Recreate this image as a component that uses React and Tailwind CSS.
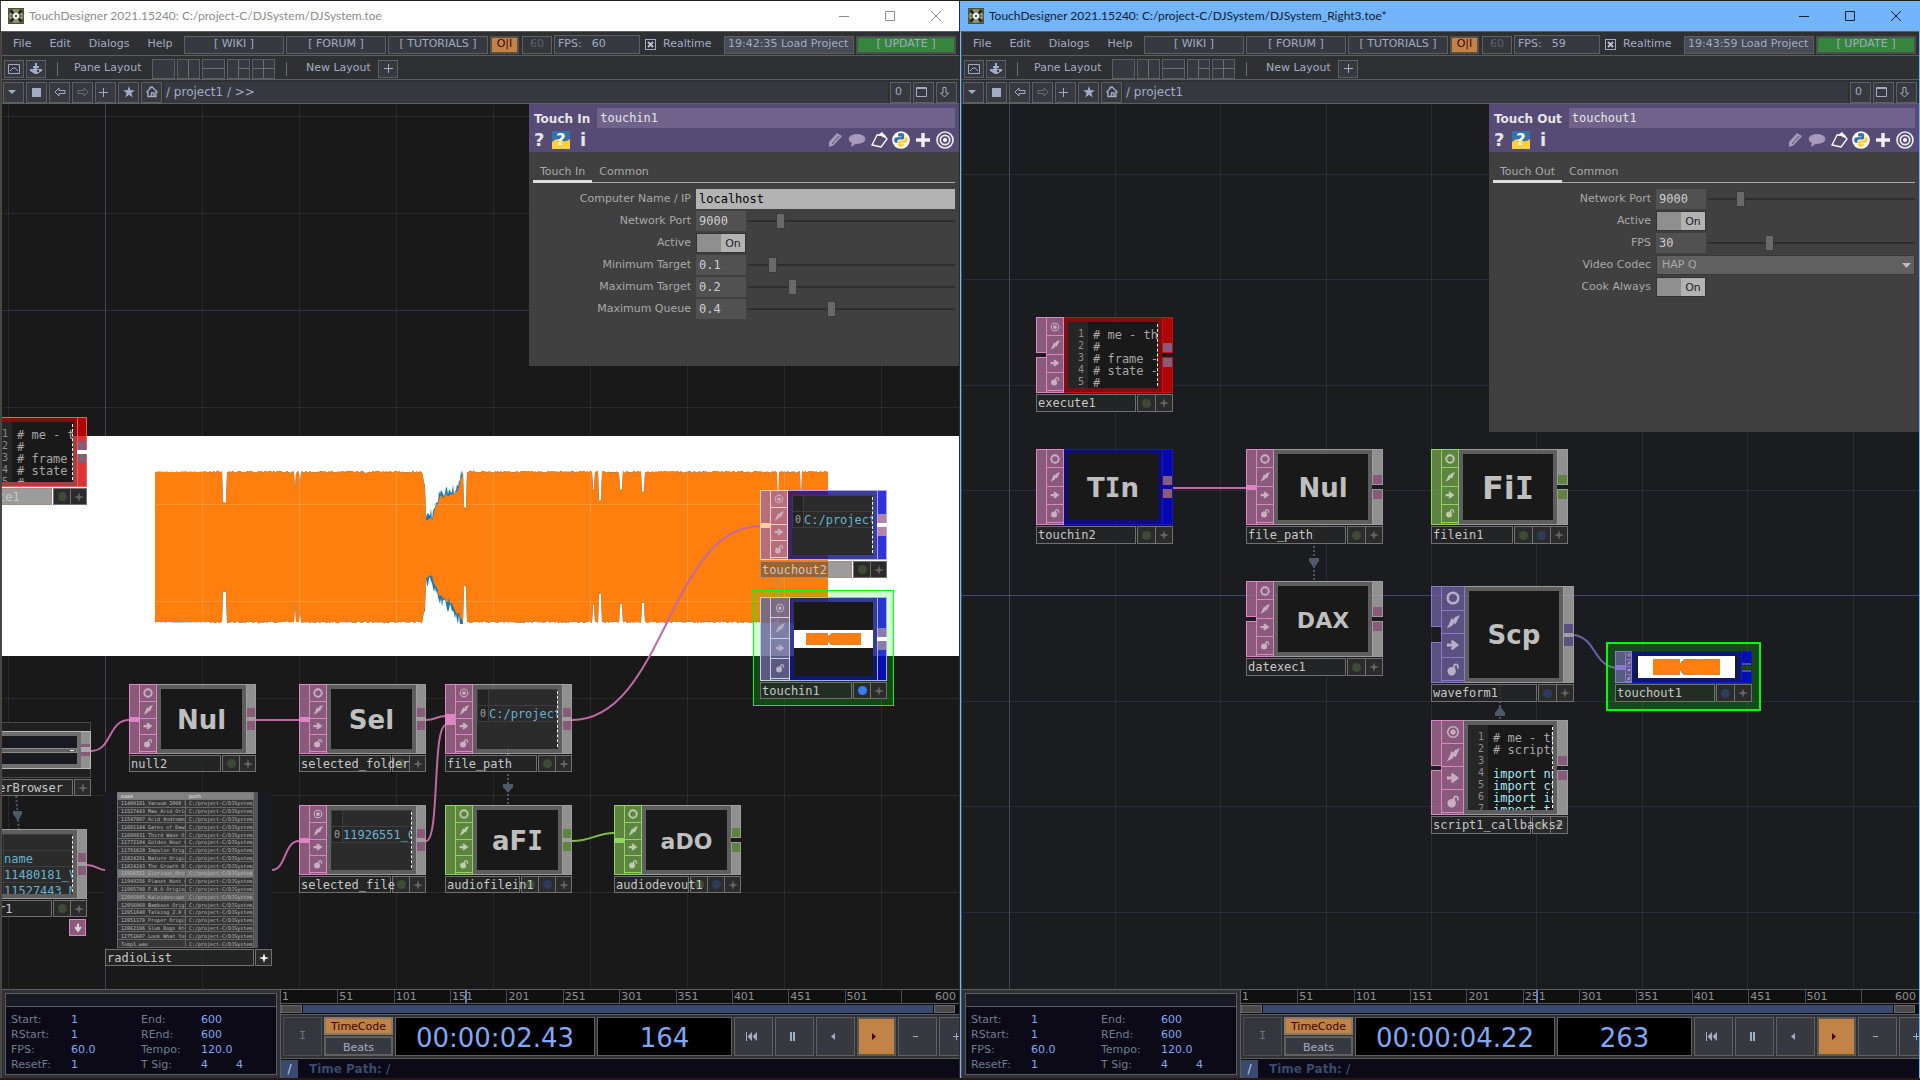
import clsx from 'clsx';

const MONO = "font-['DejaVu_Sans_Mono',monospace]";

/* ---------- small icons ---------- */

const Svg = ({ children, className, box = 16 }) => (
  <svg viewBox={`0 0 ${box} ${box}`} className={className} fill="currentColor" aria-hidden="true">
    {children}
  </svg>
);

const ViewerRing = ({ className, active }) => (
  <Svg className={className}>
    <circle cx="8" cy="8" r="6" fill="none" stroke="currentColor" strokeWidth={active ? 1.8 : 3} />
    {active && <circle cx="8" cy="8" r="3" />}
  </Svg>
);

const Bolt = ({ className }) => (
  <Svg className={className}>
    <path d="M16 0 L10 2.5 L8.5 5.5 L6.5 3.5 L4 9 L1 15.500 L7.500 12 L9 9 L11 10.500 L13 6 Z" />
  </Svg>
);

const FlagArrow = ({ className }) => (
  <Svg className={className}>
    <path d="M1 6.2 H7 L5.4 3.6 L7.6 2.4 L15 8 L7.6 13.6 L5.4 12.4 L7 9.8 H1 Z" />
  </Svg>
);

const OpenLock = ({ className }) => (
  <Svg className={className}>
    <circle cx="6.5" cy="10.5" r="4.8" />
    <path d="M9 7 V4.5 A2.4 2.4 0 0 1 13.6 4.5 V7.5" fill="none" stroke="currentColor" strokeWidth="2" />
  </Svg>
);

const Sparkle = ({ className }) => (
  <Svg className={className}>
    <path d="M8 0 L9.8 6.2 L16 8 L9.8 9.8 L8 16 L6.2 9.8 L0 8 L6.2 6.2 Z" />
  </Svg>
);

const AppLogo = () => (
  <svg viewBox="0 0 16 16" className="size-4" aria-hidden="true">
    <rect width="16" height="16" fill="#4b5238" />
    <rect x="1" y="1" width="14" height="14" fill="#8b9166" />
    <path d="M8 8L2.5 2.5M8 8L13.5 2.500M8 8L2.500 13.500M8 8L13.500 13.500" stroke="#1c1d16" strokeWidth="2.2" />
    <path d="M2 5V2H5M11 2H14V5M14 11V14H11M5 14H2V11M3 8H13" fill="none" stroke="#2c2e20" strokeWidth="1.2" />
    <circle cx="8" cy="8" r="3.2" fill="#fff" />
    <circle cx="8" cy="8" r="1.2" fill="#555" />
  </svg>
);

const PythonLogo = () => (
  <svg viewBox="0 0 18 18" className="size-[18px]" aria-hidden="true">
    <circle cx="9" cy="9" r="8.8" fill="#fff" />
    <path d="M9 2 C6.4 2 6 3 6 4.2 V5.6 H9.3 V6.2 H4.6 C3 6.2 2.2 7.4 2.2 9.2 C2.2 11 3 12 4.4 12 H5.4 V10.4 C5.4 9.2 6.4 8.6 7.4 8.6 H10.6 C11.6 8.6 12.2 7.8 12.2 7 V4.2 C12.2 2.8 11 2 9 2 Z" fill="#3572a5" />
    <path d="M9 16 C11.6 16 12 15 12 13.8 V12.4 H8.7 V11.8 H13.4 C15 11.8 15.8 10.6 15.8 8.8 C15.8 7 15 6 13.6 6 H12.8 V7.6 C12.8 8.8 11.8 9.4 10.8 9.4 H7.6 C6.6 9.4 5.9 10.2 5.9 11 V13.8 C5.9 15.2 7 16 9 16 Z" fill="#ffcf3f" />
  </svg>
);

/* ---------- toolbars ---------- */

const Divider = () => <span className="h-3.5 w-px bg-[#6a6a6a]" />;

const IconButton = ({ label, className, children }) => (
  <button
    type="button"
    aria-label={label}
    className={clsx('flex shrink-0 items-center justify-center border border-[#5f5f61] bg-[#373941] text-[#a3abc4]', className)}
  >
    {children}
  </button>
);

const LinkBox = ({ children }) => (
  <a href="#" className="flex h-[18px] w-[100px] items-center justify-center border border-[#5f5f61] bg-[#373941]">
    {children}
  </a>
);

const PaneIcon = ({ d, label }) => (
  <IconButton label={label} className="h-5 w-[23px]">
    <svg viewBox="0 0 21 18" className="h-[18px] w-[21px]" aria-hidden="true">
      <path d={d} stroke="#6e6e70" fill="none" />
    </svg>
  </IconButton>
);

const TitleBar = ({ title, focused }) => (
  <header
    className={clsx(
      'flex h-[30px] shrink-0 items-center pl-[7px] font-[Lato,sans-serif] text-xs',
      focused ? 'bg-[#72b5fd] text-[#10202f]' : 'bg-white text-[#8c8c8c]'
    )}
  >
    <AppLogo />
    <h1 className="ml-[5px] flex-1 truncate">{title}</h1>
    <button type="button" aria-label="Minimize" className="flex w-[46px] justify-center">
      <svg viewBox="0 0 10 10" className="size-2.5" aria-hidden="true"><path d="M0 5.5H10" stroke="currentColor" /></svg>
    </button>
    <button type="button" aria-label="Maximize" className="flex w-[46px] justify-center">
      <svg viewBox="0 0 10 10" className="size-2.5" aria-hidden="true"><path d="M.5 .5H9.5V9.5H.5Z" stroke="currentColor" fill="none" /></svg>
    </button>
    <button type="button" aria-label="Close" className="flex w-[46px] justify-center">
      <svg viewBox="0 0 10 10" className="size-2.5" aria-hidden="true"><path d="M0 0L10 10M10 0L0 10" stroke="currentColor" /></svg>
    </button>
  </header>
);

const MenuBar = ({ fps, status }) => (
  <nav className="flex h-6 shrink-0 items-center gap-0.5 border-t border-[#5c5e60] bg-[#2f3034] pt-0.5 pr-[3px] pl-[11px]">
    <div className="flex w-[169px] gap-[18px]">
      {['File', 'Edit', 'Dialogs', 'Help'].map((item) => (
        <button type="button" key={item}>{item}</button>
      ))}
    </div>
    <LinkBox>[ WIKI ]</LinkBox>
    <LinkBox>[ FORUM ]</LinkBox>
    <LinkBox>[ TUTORIALS ]</LinkBox>
    <button type="button" className="flex h-[18px] w-[29px] items-center justify-center border-2 border-[#55504a] bg-[#c28347] text-[#3d0404]">O|I</button>
    <span className="ml-px flex h-[18px] w-[30px] items-center justify-center border border-[#5f5f61] bg-[#34363c] text-[#5f626a]">60</span>
    <span className="flex h-[19px] w-[86px] items-center gap-2.5 border border-[#5f5f61] bg-[#373941] pl-[3px]">
      <span>FPS:</span>
      <span>{fps}</span>
    </span>
    <label className="ml-[3px] flex flex-1 items-center gap-[7px]">
      <span className="relative flex size-[11px]">
        <input type="checkbox" defaultChecked className="size-[11px] appearance-none border border-[#a3abc4] bg-[#2f3034]" />
        <svg viewBox="0 0 11 11" className="pointer-events-none absolute inset-0" aria-hidden="true">
          <path d="M3 3L8 8M8 3L3 8" stroke="#b7bfd8" strokeWidth="2" />
        </svg>
      </span>
      Realtime
    </label>
    <span className="flex h-[18px] w-[130px] items-center overflow-hidden border border-[#5f5f61] bg-[#464b55] pl-[3px] whitespace-nowrap">{status}</span>
    <button type="button" className="flex h-[18px] w-[100px] items-center justify-center border-2 border-[#4c504e] bg-[#34863d]">[ UPDATE ]</button>
  </nav>
);

const LayoutBar = () => (
  <div className="flex h-6 shrink-0 items-center gap-0.5 border-t border-[#5c5e60] bg-[#2f3034] pt-0.5 pl-0.5">
    <IconButton label="Viewer" className="h-[18px] w-5">
      <svg viewBox="0 0 12 10" className="h-2.5 w-3" aria-hidden="true">
        <path d="M.5.5H11.5V9.5H.5Z M2 7L5 4H7L10 7" stroke="currentColor" fill="none" />
      </svg>
    </IconButton>
    <IconButton label="Pane type" className="h-[18px] w-5">
      <svg viewBox="0 0 12 12" className="size-3" aria-hidden="true">
        <path d="M5 0H7V3H9V5H7V6H12V8L7 11H5L0 8V6H4V5H3V3H5Z M7 7V9H9V7Z" fill="currentColor" fillRule="evenodd" />
      </svg>
    </IconButton>
    <span className="w-[7px]" />
    <Divider />
    <span className="ml-[14px] w-[76px]">Pane Layout</span>
    <PaneIcon label="Single pane" d="" />
    <PaneIcon label="Two columns" d="M10.5 0V18" />
    <PaneIcon label="Two rows" d="M0 8.5H21" />
    <PaneIcon label="Three panes" d="M10.5 0V18M10.5 8.5H21" />
    <PaneIcon label="Four panes" d="M10.5 0V18M0 8.5H21" />
    <span className="w-[7px]" />
    <Divider />
    <span className="ml-[17px] w-[70px]">New Layout</span>
    <IconButton label="Add layout" className="h-[18px] w-5">
      <svg viewBox="0 0 9 9" className="size-[9px]" aria-hidden="true"><path d="M4.5 0V9M0 4.5H9" stroke="currentColor" /></svg>
    </IconButton>
  </div>
);

const PathBar = ({ path }) => (
  <div className="flex h-[25px] shrink-0 items-center gap-0.5 border-y border-[#5c5e60] bg-[#2f3034] pt-px pr-0.5 pl-px">
    <IconButton label="Pane menu" className="size-[21px] pr-1">
      <svg viewBox="0 0 8 4" className="h-1 w-2" aria-hidden="true"><path d="M0 0H8L4 4Z" fill="currentColor" /></svg>
    </IconButton>
    <IconButton label="Stop" className="size-[21px]"><span className="size-[9px] bg-[#a3abc4]" /></IconButton>
    <IconButton label="Back" className="size-[21px]">
      <svg viewBox="0 0 12 10" className="h-2.5 w-3" aria-hidden="true"><path d="M1 5L5 1V3.5H11V6.5H5V9Z" stroke="currentColor" fill="none" /></svg>
    </IconButton>
    <IconButton label="Forward" className="size-[21px]">
      <svg viewBox="0 0 12 10" className="h-2.5 w-3" aria-hidden="true"><path d="M11 5L7 1V3.5H1V6.5H7V9Z" stroke="#6b6e77" fill="none" /></svg>
    </IconButton>
    <IconButton label="Add bookmark" className="size-[21px] pr-1">
      <svg viewBox="0 0 9 9" className="size-[9px]" aria-hidden="true"><path d="M4.5 0V9M0 4.5H9" stroke="currentColor" /></svg>
    </IconButton>
    <IconButton label="Bookmarks" className="size-[21px]">
      <svg viewBox="0 0 12 12" className="size-3" aria-hidden="true"><path d="M6 0L7.5 4.3H12L8.4 7L9.7 11.6L6 8.8L2.3 11.6L3.6 7L0 4.3H4.5Z" fill="currentColor" /></svg>
    </IconButton>
    <IconButton label="Home" className="size-[21px]">
      <svg viewBox="0 0 12 12" className="size-3" aria-hidden="true"><path d="M.5 6.5L4 2.5V1.5H5.5L6 .8L11.5 6.5M2 6V10.5H10V6M5.5 10.5V7H8V10" stroke="currentColor" fill="none" strokeWidth="1.4" /></svg>
    </IconButton>
    <span className="h-[21px] flex-1 bg-[#373941] px-0.5 text-xs leading-5 whitespace-pre">{path}</span>
    <IconButton label="Reset zoom" className="size-[21px] pr-1">0</IconButton>
    <IconButton label="Float pane" className="size-[21px] pr-1">
      <svg viewBox="0 0 11 10" className="h-2.5 w-[11px]" aria-hidden="true"><path d="M.5.5H10.5V9.5H.5ZM0 1.5H11" stroke="currentColor" fill="none" /></svg>
    </IconButton>
    <IconButton label="Collapse" className="size-[21px] pr-1">
      <svg viewBox="0 0 9 11" className="h-[11px] w-[9px]" aria-hidden="true"><path d="M3 .5H6V6H8.5L4.5 10L.5 6H3Z" stroke="currentColor" fill="none" /></svg>
    </IconButton>
  </div>
);

/* ---------- parameter panel ---------- */

const fieldClass = `${MONO} h-5 px-[3px] text-xs outline-none`;

const ParamRow = ({ param, prefix }) => {
  const id = `${prefix}-${param.label.replace(/\W+/g, '-').toLowerCase()}`;
  return (
    <div className="flex h-5 items-center">
      <label htmlFor={id} className="w-[157px] text-right text-[#a9a9a9]">{param.label}</label>
      <div className="ml-[5px] flex flex-1 items-center">
        {param.type === 'text' && (
          <input id={id} defaultValue={param.value} className={clsx(fieldClass, 'w-full bg-[#b3b3b3] text-black')} />
        )}
        {param.type === 'number' && (
          <>
            <input id={id} defaultValue={param.value} className={clsx(fieldClass, 'w-[50px] bg-[#515151] text-[#cfcfcf]')} />
            <span className="relative ml-0.5 flex h-5 flex-1 items-center">
              <span className="absolute inset-x-0 h-0.5 bg-[#2d2d2d]" />
              <input
                type="range"
                aria-label={`${param.label} slider`}
                min="0"
                max="100"
                defaultValue={param.slider}
                className="relative h-4 w-full appearance-none bg-transparent [&::-webkit-slider-thumb]:h-4 [&::-webkit-slider-thumb]:w-[9px] [&::-webkit-slider-thumb]:appearance-none [&::-webkit-slider-thumb]:border [&::-webkit-slider-thumb]:border-[#3a3a3a] [&::-webkit-slider-thumb]:bg-[#696969]"
              />
            </span>
          </>
        )}
        {param.type === 'toggle' && (
          <span className="flex h-5 w-[50px] border border-[#333] bg-[#b3b3b3] text-[#222]">
            <input id={id} type="checkbox" defaultChecked className="h-full w-6 appearance-none bg-[#8f8f8f]" />
            <span className="flex-1 text-center leading-[19px]">On</span>
          </span>
        )}
        {param.type === 'menu' && (
          <span className="relative flex w-full">
            <select id={id} className="h-5 w-full appearance-none border border-[#383838] bg-[#606060] px-[5px] text-[#a9a9a9]">
              <option>{param.value}</option>
            </select>
            <svg viewBox="0 0 9 5" className="pointer-events-none absolute top-2 right-1 h-[5px] w-[9px]" aria-hidden="true">
              <path d="M0 0H9L4.5 5Z" fill="#bdbdbd" />
            </svg>
          </span>
        )}
      </div>
    </div>
  );
};

const ParamPanel = ({ type, name, params, className }) => (
  <section className={clsx('absolute top-0 right-0 w-[430px] bg-[#404040] pr-1 pl-[5px]', className)}>
    <div className="-mr-1 -ml-[5px] h-12 bg-[#564b75] pt-1 pr-1 pl-[5px] text-[#e6e6e6]">
      <div className="flex h-5 items-center gap-[7px]">
        <span className="pt-0.5 text-xs font-bold">{type}</span>
        <input aria-label="Operator name" defaultValue={name} className={clsx(fieldClass, 'min-w-0 flex-1 bg-[#6f638b] text-[#e6e6e6]')} />
      </div>
      <div className="mt-[3px] flex h-[18px] items-center">
        <button type="button" aria-label="Help" className="w-[10px] text-lg leading-[18px] font-bold">?</button>
        <button type="button" aria-label="Python help" className="relative ml-2 flex size-[18px] items-center justify-center text-base leading-none font-bold text-white">
          <svg viewBox="0 0 18 18" className="absolute inset-0" aria-hidden="true">
            <rect width="18" height="18" fill="#3572a5" />
            <path d="M0 11Q5 6 9 9T18 8V18H0Z" fill="#ffcf3f" />
          </svg>
          <span className="relative">?</span>
        </button>
        <button type="button" aria-label="Info" className="ml-[10px] text-lg leading-[18px] font-bold">i</button>
        <div className="ml-auto flex items-center gap-1 pr-px">
          <button type="button" aria-label="Edit">
            <svg viewBox="0 0 16 16" className="size-4" aria-hidden="true"><path d="M1 15V10L9 1L14 4L6 13Z" fill="#a59bb8" /><path d="M4 12L11 4" stroke="#564b75" /></svg>
          </button>
          <button type="button" aria-label="Comment">
            <svg viewBox="0 0 18 16" className="h-4 w-[18px]" aria-hidden="true"><ellipse cx="9" cy="7" rx="8.3" ry="5" fill="#a59bb8" /><path d="M4 10L3 15L9 11Z" fill="#a59bb8" /></svg>
          </button>
          <button type="button" aria-label="Tag">
            <svg viewBox="0 0 18 18" className="size-[18px]" aria-hidden="true"><path d="M7 4L2 14L11 16L17 8L14 4Z" fill="none" stroke="#fff" strokeWidth="1.3" /><path d="M8 4L12 1L15 5V7L11 5Z" fill="#fff" /></svg>
          </button>
          <button type="button" aria-label="Python"><PythonLogo /></button>
          <button type="button" aria-label="Add">
            <svg viewBox="0 0 18 18" className="size-[18px]" aria-hidden="true"><path d="M9 2V16M2 9H16" stroke="#f0f0f0" strokeWidth="3.4" /></svg>
          </button>
          <button type="button" aria-label="Target">
            <svg viewBox="0 0 18 18" className="size-[18px]" aria-hidden="true">
              <g fill="none" stroke="#e8e8e8" strokeWidth="1.7"><circle cx="9" cy="9" r="8" /><circle cx="9" cy="9" r="4.7" /></g>
              <circle cx="9" cy="9" r="2" fill="#fff" />
            </svg>
          </button>
        </div>
      </div>
    </div>
    <div className="mt-[11px] -ml-px flex h-5 border-b border-[#a9a9a9] text-[#a9a9a9]">
      <button type="button" className="-mb-px h-5 border-b-[3px] border-[#dedede] px-[7px] leading-4">{type}</button>
      <button type="button" className="h-[17px] px-[7px] leading-4">Common</button>
    </div>
    <div className="mt-1.5 flex flex-col gap-0.5">
      {params.map((p) => <ParamRow key={p.label} param={p} prefix={name} />)}
    </div>
  </section>
);

/* ---------- network nodes ---------- */

const FAMILY = {
  dat: { fill: 'bg-[#a66a93]/80', line: 'border-[#de86c4]', lit: 'bg-[#de86c4]', port: 'bg-[#8a5a7b]' },
  chop: { fill: 'bg-[#709f4b]/80', line: 'border-[#8fd65c]', lit: 'bg-[#8fd65c]', port: 'bg-[#5f8441]' },
  top: { fill: 'bg-[#6a5f9a]/80', line: 'border-[#8a78cc]', lit: 'bg-[#8a78cc]', port: 'bg-[#5a5180]' },
  // nodes lying over the bright background viewer
  datBright: { fill: 'bg-[#a66a93]/80', line: 'border-[#f9cfc4]', lit: 'bg-[#ffcf9f]', port: 'bg-[#b683a8]' },
  topBright: { fill: 'bg-[#6a5f9a]/80', line: 'border-[#d2c8ee]', lit: 'bg-white', port: 'bg-[#8a7ba8]' },
};

const FRAME = {
  gray: { body: 'bg-[#6f6f6f]/80', line: 'border-[#9c9c9c]', out: 'bg-[#aeaeae]/80', join: 'bg-[#9f9f9f]' },
  red: { body: 'bg-[#920e0e]/80', line: 'border-[#c41212]', out: 'bg-[#d60000]/80', join: 'bg-[#c41212]' },
  blue: { body: 'bg-[#0c0c86]/80', line: 'border-[#1616c4]', out: 'bg-[#0000d6]/80', join: 'bg-[#0808bc]' },
  redBright: { body: 'bg-[#920e0e]/80', line: 'border-[#e8605c]', out: 'bg-[#d60000]/80', join: 'bg-white' },
  blueBright: { body: 'bg-[#0c0c86]/80', line: 'border-[#aaaaf6]', out: 'bg-[#0000d6]/80', join: 'bg-white' },
};

const DOT = { green: 'bg-[#3d4a34]', blue: 'bg-[#2c3c5c]', active: 'bg-[#3b7bf0]' };

const NameBar = ({ name, dots = [], cell, over, bright }) => (
  <div className={clsx(MONO, 'mt-px flex gap-px text-xs text-[#c8c8c8]', cell === 18 ? 'h-[18px]' : 'h-[17px]')}>
    <span className={clsx('w-0 flex-1 border pl-px leading-4 whitespace-nowrap', over ? 'border-[#a09080] bg-[#4a4a4a]/55' : 'border-[#707070] bg-[#262727]/80')}>
      <span className="relative z-10">{name}</span>
    </span>
    <span className="flex">
      {dots.map((d) => (
        <span key={d} className={clsx('-mr-px flex h-full items-center justify-center border border-[#707070] bg-[#2b2b2b]', cell === 18 ? 'w-[19px]' : 'w-[18px]')}>
          <span className={clsx('size-[9px] rounded-full', DOT[d])} />
        </span>
      ))}
      <button type="button" aria-label={`Activate ${name}`} className={clsx('flex h-full items-center justify-center border border-[#707070] bg-[#2b2b2b]', cell === 18 ? 'w-[18px]' : 'w-[17px]')}>
        <Sparkle className={clsx('size-2.5', bright ? 'text-white' : 'text-[#656565]')} />
      </button>
    </span>
  </div>
);

const Ports = ({ port, frm, join, small, wide }) => (
  <div className={clsx('flex flex-col', wide ? 'w-[11px]' : 'w-2.5')}>
    <div className={clsx('flex flex-1 flex-col justify-end border', frm.out, frm.line, join && 'border-b-0')}>
      <span className={clsx(port, small ? 'h-0.5' : 'h-[9px]')} />
    </div>
    <div className={clsx(small ? 'h-[3px]' : 'h-1', join && frm.join)} />
    <div className={clsx('flex flex-1 flex-col border', frm.out, frm.line, join && 'border-t-0')}>
      <span className={clsx(port, small ? 'h-0.5' : 'h-[9px]')} />
    </div>
  </div>
);

const Inputs = ({ fam, input }) => {
  if (input === 'none') return <div className={clsx('-mr-px w-[11px] border', fam.fill, fam.line)} />;
  if (input === 'split' || input === 'wide') {
    return (
      <div className={clsx('-mr-px flex w-[11px] flex-col', input === 'wide' ? 'gap-[15px]' : 'gap-1')}>
        <div className={clsx('flex-1 border', fam.fill, fam.line)} />
        <div className={clsx('flex-1 border', fam.fill, fam.line)} />
      </div>
    );
  }
  return (
    <div className={clsx('-mr-px flex w-[11px] flex-col justify-center border', fam.fill, fam.line)}>
      <span className={clsx(input === 'double' ? 'h-[11px]' : 'h-[5px]', fam.lit)} />
    </div>
  );
};

const FLAG_W = { 7: 'w-[7px]', 18: 'w-[18px]', 20: 'w-5', 24: 'w-6', 23: 'w-[23px]' };

const Node = ({ x, y, w = 127, h = 70, cell = 17, flagW = 18, family = 'dat', frame = 'gray', name, dots = ['green'], input = 'wired', output = true, active, over, selected, children }) => {
  const fam = FAMILY[family];
  const frm = FRAME[frame];
  const icon = flagW === 7 ? 'size-1' : flagW > 20 ? 'size-3.5' : 'size-2.5';
  return (
    <div className="absolute" style={{ left: x, top: y, width: w }}>
      {selected === 1 && <div className="absolute -inset-x-[7px] -inset-y-[7px] border border-[#00ff00] bg-[#00ff00]/20" />}
      {selected === 2 && <div className="absolute -inset-x-[9px] -inset-y-[9px] border-2 border-[#00ff00] bg-[#00ff00]/20" />}
      <div className="relative flex" style={{ height: h }}>
        <Inputs fam={fam} input={input} />
        <div className={clsx('flex flex-col border', FLAG_W[flagW], fam.fill, fam.line, family.startsWith('top') ? 'text-[#b5afc9]' : family === 'chop' ? 'text-[#b9cfa8]' : 'text-[#ccaec2]')}>
          {[
            <ViewerRing key="v" active={active} className={icon} />,
            <Bolt key="b" className={icon} />,
            <FlagArrow key="a" className={icon} />,
            <OpenLock key="l" className={icon} />,
          ].map((el) => (
            <span key={el.key} className={clsx('flex flex-1 items-center justify-center border-b', fam.line)}>{el}</span>
          ))}
          {flagW !== 7 && <span className="h-px" />}
        </div>
        <div className={clsx('flex flex-1 border-y p-1', frm.body, frm.line)}>
          <div className="relative w-0 flex-1 overflow-hidden bg-[#191919]">{children}</div>
        </div>
        <Ports port={fam.port} frm={frm} join={output} small={flagW === 7} wide={cell === 18} />
      </div>
      <div className="relative">
        <NameBar name={name} dots={dots} cell={cell} over={over} />
      </div>
    </div>
  );
};

// The operator tags use a capital I with bars, which only the mono face has.
const Glyph = ({ className = 'text-[26px]', tag }) => (
  <span className={clsx('flex h-full items-center justify-center pt-0.5 font-bold text-[#bfbfbf]', className)}>
    <span>
      {tag.split('').map((ch, i) => (ch === 'I' ? <span key={i} className={MONO}>I</span> : ch))}
    </span>
  </span>
);

const DashEdge = () => <span className="absolute inset-y-0.5 right-0 border-r border-dashed border-white" />;

const Code = ({ lines }) => (
  <div className={clsx(MONO, 'flex h-full text-xs leading-3')}>
    <div className="w-5 shrink-0 bg-[#262626] pt-1.5 pr-1 text-right text-[10px] leading-3 text-[#8e8e8e]">
      {lines.map((_, i) => <div key={i}>{i + 1}</div>)}
    </div>
    <div className="pt-[7px] pl-[5px] whitespace-pre text-[#a6a6a6]">
      {lines.map((line, i) => (
        <div key={i} className={clsx('h-3', line.startsWith('import') && 'text-[#a5e9f4]')}>{line}</div>
      ))}
    </div>
    <DashEdge />
  </div>
);

const Cells = ({ index, rows }) => (
  <div className={clsx(MONO, 'h-full bg-[#2b2b2b] text-xs')}>
    <table className="w-full table-fixed border-collapse">
      <tbody>
        {rows.map((row, i) => (
          <tr key={i} className="h-4">
            <td className="w-[11px] border border-[#3d3d3d] bg-[#242424] p-0 text-center text-[10px] leading-[14px] text-[#a0a0a0]">{i === index ? '0' : ''}</td>
            <td className="overflow-hidden border border-[#3d3d3d] p-0 leading-[14px] whitespace-nowrap text-[#66b4cf]">{row}</td>
          </tr>
        ))}
      </tbody>
    </table>
    <DashEdge />
  </div>
);

/* ---------- waveform ---------- */

// narrow gaps along the 673px wide clip: position, half width, amplitude left
const dips = [
  [69.5, 1.5, 0.59], [140, 0.5, 0.76], [145, 0.5, 0.84], [310, 1, 0.52], [438.5, 1, 0.76], [445, 1, 0.62],
  [466, 1, 0.76], [488, 1, 0.74], [623, 0.5, 0.3], [646, 0.5, 0.5],
];

const noise = (i, seed) => {
  const v = Math.sin(i * 12.9898 + seed * 78.233) * 43758.5453;
  return v - Math.floor(v);
};

// breakdown section, as [x, upper, lower]
const breakdown = [
  [267, 1, 1], [270, 0.8, 0.8], [271, 0.38, 0.38], [277, 0.38, 0.38], [280, 0.5, 0.5], [285, 0.66, 0.66],
  [295, 0.7, 0.72], [302, 0.72, 0.86], [305, 0.85, 0.9], [308, 1, 1],
];

const amplitude = (x, side) => {
  const dip = dips.find(([at, half]) => Math.abs(x - at) <= half);
  if (dip) return dip[2];
  if (x <= 267 || x >= 308) return 1;
  const next = breakdown.findIndex(([at]) => at >= x);
  const a = breakdown[next - 1];
  const b = breakdown[next];
  return a[side] + ((b[side] - a[side]) * (x - a[0])) / (b[0] - a[0]);
};

const outline = (extra) => {
  const top = [];
  const bottom = [];
  for (let x = 0; x <= 673; x += 1) {
    const rough = x < 50 ? 0 : x > 269 && x < 308 ? 5 : 2;
    const up = 75 * amplitude(x, 1) + (noise(x, 1) - 0.5) * rough + extra * noise(x, 3) * (rough > 3 ? 9 : 0.5);
    const down = 75 * amplitude(x, 2) + (noise(x, 2) - 0.5) * rough + extra * noise(x, 4) * (rough > 3 ? 11 : 0.5);
    top.push(`${x} ${(77 - up).toFixed(1)}`);
    bottom.unshift(`${x} ${(77 + down).toFixed(1)}`);
  }
  return `M${top.join('L')}L${bottom.join('L')}Z`;
};

const BLUE_WAVE = outline(1);
const ORANGE_WAVE = outline(0);

const Waveform = ({ className }) => (
  <svg viewBox="0 0 673 154" preserveAspectRatio="none" className={className} aria-hidden="true">
    <path d={BLUE_WAVE} fill="#1f77b4" />
    <path d={ORANGE_WAVE} fill="#ff7f0e" />
  </svg>
);

/* ---------- network editor ---------- */

const Grid = ({ xs, ys, axisX, axisY, axisOpacity }) => (
  <g>
    {xs.map((x) => <path key={`x${x}`} d={`M${x + 0.5} 0V2000`} stroke={x === axisX ? '#7d74b8' : '#a0a0c8'} strokeOpacity={x === axisX ? 0.45 : 0.12} />)}
    {ys.map((y) => <path key={`y${y}`} d={`M0 ${y + 0.5}H4000`} stroke={y === axisY ? '#6a6ac8' : '#a0a0c8'} strokeOpacity={y === axisY ? axisOpacity : 0.12} />)}
  </g>
);

const Wire = ({ d, color = '#c268a6' }) => <path d={d} stroke={color} strokeWidth="2" fill="none" />;

const Reference = ({ d, arrow }) => (
  <g>
    <path d={d} stroke="#4d5a6a" strokeWidth="2" strokeDasharray="2 2" fill="none" />
    <path d={arrow} fill="#4d5a6a" />
  </g>
);

const TRACKS = [
  '11480181_Vacuum_2008_Enya_Remix', '11527443_Mau_Acid_Original_Version', '11547807_Acid_Andromeda_Original',
  '11601104_Gates_of_Dawn_Original', '11600831_Third_Wave_Original_Mix', '11772104_Golden_Hour_Original',
  '11791620_Impulse_Original_Mix', '11824201_Nature_Original_Mix', '11824243_The_Growth_Original',
  '11926551_Glorious_Original_Mix', '11949256_Planet_Hunt_Original', '11985708_F.N.O_Original_Mix',
  '12005085_Kaleidoscope_Original', '12056068_Bamboos_Original_Mix', '12051048_Talking_2.0_Hed_Original',
  '12051178_Proper_Original_Mix', '12062106_Slum_Dogs_Atom_Ion_Mix', '12751607_Look_What_Your_Love_Mix', 'Temp1.wav',
];

const RadioList = () => (
  <div className="absolute" style={{ left: 105, top: 792, width: 167 }}>
    <div className="flex h-[156px] justify-center overflow-hidden bg-[#181a20] pr-0.5">
      <div className="flex w-[141px] border-r-4 border-[#555]">
        <table className={clsx(MONO, 'w-full table-fixed border-collapse text-[5px] leading-[6px] text-[#bdbdbd]')}>
          <thead>
            <tr className="bg-[#828282] text-left text-[#c8c8c8]">
              <th className="border border-[#777] p-0 pl-[3px]">name</th>
              <th className="border border-[#777] p-0 pl-[3px]">path</th>
            </tr>
          </thead>
          <tbody>
            {TRACKS.map((t, i) => (
              <tr key={t} className={i === 9 ? 'bg-[#7b7b7b]' : i === 12 ? 'bg-[#5f5f5f]' : 'bg-[#363636]'}>
                <td className="overflow-hidden border border-[#666] p-0 pl-[3px] whitespace-nowrap">{t}</td>
                <td className="overflow-hidden border border-[#666] p-0 pl-[3px] whitespace-nowrap">C:/project-C/DJSystem/music/11</td>
              </tr>
            ))}
          </tbody>
        </table>
      </div>
    </div>
    <NameBar name="radioList" cell={17} bright />
  </div>
);

const FolderBrowser = () => (
  <div className="absolute" style={{ left: -40, top: 722, width: 131 }}>
    <div className="h-[56px] border border-[#484848] bg-[#202020] pt-2">
      <div className="-mx-px flex h-[38px] border border-[#b8b8b8] bg-[#6f6f6f]">
        <div className="m-1 flex flex-1 items-center bg-[#181a20]">
          <span className="flex h-[5px] flex-1 items-center justify-end border border-[#8a8a8a] bg-[#5f5f5f] pr-0.5"><span className="h-px w-1 bg-white" /></span>
        </div>
        <div className="flex w-[9px] flex-col justify-center bg-[#909090]">
          <span className="h-[3px] bg-[#8a5a7b]" />
          <span className="h-[5px] bg-[#a8a8a8]" />
          <span className="h-1 bg-[#8a5a7b]" />
        </div>
      </div>
    </div>
    <div className={clsx(MONO, 'mt-px flex h-[17px] gap-px text-xs text-[#c8c8c8]')}>
      <span className="flex-1 border border-[#707070] bg-[#262727] pr-[9px] text-right leading-4 whitespace-nowrap">folderBrowser</span>
      <span className="flex w-[17px] items-center justify-center border border-[#707070] bg-[#2b2b2b]"><Sparkle className="size-2.5 text-[#656565]" /></span>
    </div>
  </div>
);

// Children are placed in window coordinates, the toolbars above take 104px.
const Network = ({ className, wires, children, panel }) => (
  <main className={clsx('relative min-h-0 flex-1 overflow-hidden', className)}>
    <svg className="absolute inset-0 size-full" aria-hidden="true">
      <g transform="translate(-2 -104)">{wires}</g>
    </svg>
    <div className="absolute -top-26 -left-0.5">{children}</div>
    {panel}
  </main>
);

const LeftNetwork = () => (
  <Network
    className="bg-[#191919]"
    wires={
      <>
        <Grid xs={[8, 105, 202, 299, 396, 493, 590, 687, 784, 881]} ys={[116, 213, 310, 407, 698, 795, 892]} axisX={105} axisY={310} axisOpacity={0.28} />
        <rect x="2" y="436" width="4000" height="220" fill="#fff" />
        <svg x="155" y="470" width="673" height="154"><path d={BLUE_WAVE} fill="#1f77b4" /><path d={ORANGE_WAVE} fill="#ff7f0e" /></svg>
        <path d="M155 504.500H828M155 601.500H828M202.500 472V622M299.500 472V622M396.500 472V622M493.500 472V622M590.500 472V622M687.500 472V622M784.500 472V622" stroke="#fff" strokeOpacity="0.15" />
        <Wire d="M91 751C112 751 108 720 129 720" />
        <Wire d="M256 720H299" />
        <Wire d="M426 720C436 720 436 716 446 716" />
        <Wire d="M426 841C440 841 432 725 446 725" />
        <Wire d="M87 865C97 865 97 870 105 870" />
        <Wire d="M272 870C286 870 284 841 299 841" />
        <Wire d="M572 720C664 720 670 526 760 526" />
        <Wire d="M572 841C592 841 596 833 614 833" color="#7dbb4e" />
        <Reference d="M508 750V805" arrow="M503 784H513V787L508 793L503 787Z" />
        <Reference d="M14 768L19 832" arrow="M13 811H22V814L18 821L13 814Z" />
      </>
    }
    panel={
      <ParamPanel
        type="Touch In"
        name="touchin1"
        className="h-[262px]"
        params={[
          { label: 'Computer Name / IP', type: 'text', value: 'localhost' },
          { label: 'Network Port', type: 'number', value: '9000', slider: 14 },
          { label: 'Active', type: 'toggle' },
          { label: 'Minimum Target', type: 'number', value: '0.1', slider: 10 },
          { label: 'Maximum Target', type: 'number', value: '0.2', slider: 20 },
          { label: 'Maximum Queue', type: 'number', value: '0.4', slider: 40 },
        ]}
      />
    }
  >
    <Node x={-40} y={417} frame="redBright" name="execute1" active over>
      <Code lines={['# me - t', '#', '# frame', '# state', '#']} />
    </Node>
    <Node x={760} y={490} family="datBright" frame="blueBright" name="touchout2" active over>
      <Cells index={1} rows={['', 'C:/project']} />
    </Node>
    <Node x={760} y={597} h={84} flagW={20} family="topBright" frame="blueBright" name="touchin1" dots={['active']} input="none" active selected={1}>
      <div className="flex h-full items-center">
        <div className="flex h-[18px] w-full items-center justify-center bg-white"><Waveform className="h-3 w-[55px]" /></div>
      </div>
    </Node>
    <FolderBrowser />
    <Node x={129} y={684} name="null2"><Glyph tag="Nul" /></Node>
    <Node x={299} y={684} name="selected_folder"><Glyph tag="Sel" /></Node>
    <Node x={445} y={684} name="file_path" input="double" active><Cells index={1} rows={['', 'C:/project']} /></Node>
    <Node x={-40} y={829} name="folder1" active>
      <Cells index={-1} rows={['', 'name', '11480181_V', '11527443_M']} />
    </Node>
    <RadioList />
    <Node x={299} y={805} name="selected_file" active><Cells index={1} rows={['', '11926551_G']} /></Node>
    <Node x={445} y={805} family="chop" name="audiofilein1" dots={['green', 'blue']} input="none"><Glyph tag="aFI" /></Node>
    <Node x={614} y={805} family="chop" name="audiodevout1" dots={['green', 'blue']} output={false}><Glyph className="text-[22px]" tag="aDO" /></Node>
    <button type="button" aria-label="Expand" className="absolute flex size-[17px] items-center justify-center border border-[#de86c4] bg-[#8a5a7b] text-[#e6cfe0]" style={{ left: 69, top: 919 }}>
      <FlagArrow className="size-2.5 rotate-90" />
    </button>
  </Network>
);

const RightNetwork = () => (
  <Network
    className="bg-[#1b1c20]"
    wires={
      <>
        <Grid xs={[49, 155, 260, 366, 471, 576, 682, 787, 893]} ys={[174, 279, 385, 490, 595, 701, 806, 912]} axisX={49} axisY={595} axisOpacity={0.55} />
        <Wire d="M213 488H286" />
        <Wire d="M614 635C636 638 634 666 656 668" color="#6d5fae" />
        <Reference d="M354 526V581" arrow="M349 558H359V561L354 568L349 561Z" />
        <Reference d="M540 685V722" arrow="M535 716H545V713L540 706L535 713Z" />
      </>
    }
    panel={
      <ParamPanel
        type="Touch Out"
        name="touchout1"
        className="h-[328px]"
        params={[
          { label: 'Network Port', type: 'number', value: '9000', slider: 14 },
          { label: 'Active', type: 'toggle' },
          { label: 'FPS', type: 'number', value: '30', slider: 29 },
          { label: 'Video Codec', type: 'menu', value: 'HAP Q' },
          { label: 'Cook Always', type: 'toggle' },
        ]}
      />
    }
  >
    <Node x={76} y={317} w={137} h={76} cell={18} frame="red" name="execute1" input="split" output={false} active>
      <Code lines={['# me - this', '#', '# frame -', '# state -', '#']} />
    </Node>
    <Node x={76} y={449} w={137} h={76} cell={18} frame="blue" name="touchin2" input="none"><Glyph tag="TIn" /></Node>
    <Node x={286} y={449} w={137} h={76} cell={18} name="file_path" output={false}><Glyph tag="Nul" /></Node>
    <Node x={286} y={581} w={137} h={76} cell={18} name="datexec1" input="split" output={false}><Glyph className="text-[22px]" tag="DAX" /></Node>
    <Node x={471} y={449} w={137} h={76} cell={18} family="chop" name="filein1" dots={['green', 'blue']} input="none" output={false}><Glyph className="text-[32px]" tag="FiI" /></Node>
    <Node x={471} y={586} w={143} h={97} cell={18} flagW={24} family="top" name="waveform1" dots={['blue']} input="wide"><Glyph tag="Scp" /></Node>
    <Node x={655} y={651} w={137} h={32} cell={18} flagW={7} family="top" frame="blue" name="touchout1" dots={['blue']} output={false} selected={2} active>
      <div className="mx-0.5 flex h-full items-center justify-center bg-white"><Waveform className="h-4 w-[67px]" /></div>
    </Node>
    <Node x={471} y={720} w={137} h={95} cell={18} flagW={23} name="script1_callbacks2" input="split" output={false} active>
      <Code lines={['# me - this', '# scriptOp', '', 'import numpy', 'import cv2', 'import io', 'import time']} />
    </Node>
  </Network>
);

/* ---------- timeline ---------- */

const RANGE = [
  ['Start:', '1', 'End:', '600'],
  ['RStart:', '1', 'REnd:', '600'],
  ['FPS:', '60.0', 'Tempo:', '120.0'],
  ['ResetF:', '1', 'T Sig:', '4', '4'],
];

const TransportButton = ({ label, active, d }) => (
  <button
    type="button"
    aria-label={label}
    className={clsx('flex w-[39px] shrink-0 items-center justify-center pr-1', active ? 'border-2 border-[#5c5854] bg-[#c28347] text-[#3d0404]' : 'border border-[#606062] bg-[#373941] text-[#a3abc4]')}
  >
    <svg viewBox="0 0 11 9" className="h-[9px] w-[11px]" aria-hidden="true"><path d={d} fill="currentColor" /></svg>
  </button>
);

const Timeline = ({ timecode, frame }) => (
  <footer className="flex h-[89px] shrink-0 border-t border-[#5c5e60] bg-[#2f3135]">
    <div className="flex w-[278px] shrink-0 p-[3px]">
      <div className="flex flex-1 flex-col border border-[#5a5c62] bg-[#0b0a16]">
        <div className="h-[13px] border-b border-[#5a5c62] bg-[#1a1a24]" />
        <table className="mt-[5px] ml-[5px] w-[255px] table-fixed text-[#82a8f4]">
          <tbody>
            {RANGE.map(([a, b, c, d, e]) => (
              <tr key={a} className="h-[15px] leading-[15px]">
                <th className="w-[60px] p-0 text-left font-normal text-[#6f7d90]">{a}</th>
                <td className="w-[70px] p-0">{b}</td>
                <th className="w-[60px] p-0 text-left font-normal text-[#6f7d90]">{c}</th>
                <td className="w-[35px] p-0">{d}</td>
                <td className="p-0">{e}</td>
              </tr>
            ))}
          </tbody>
        </table>
      </div>
    </div>
    <div className="flex min-w-0 flex-1 flex-col overflow-hidden border-l border-[#5a5c62]">
      <div className="bg-[#101010] pr-[3px]">
        <div className="relative flex h-[13px] leading-[14px] text-[#8f8f8f]">
          {[1, 51, 101, 151, 201, 251, 301, 351, 401, 451, 501].map((n) => (
            <span key={n} className="w-[8.35%] border-l border-[#4c4c4c] pl-px first:border-l-0">{n}</span>
          ))}
          <span className="flex-1 border-l border-[#4c4c4c] text-right">600</span>
          <span className="absolute inset-y-0 w-0.5 bg-[#6a7fb0]" style={{ left: `${((frame - 1) / 599) * 100}%` }} />
        </div>
      </div>
      <div className="flex h-3 items-center gap-px border-y border-[#5a5c62] bg-[#0c0c10] pr-1">
        <span className="h-2 w-[21px] border border-[#6a6a6a] bg-[#4a4a4a]" />
        <span className="h-2 flex-1 bg-[#394a6e]" />
        <span className="h-2 w-[21px] border border-[#6a6a6a] bg-[#4a4a4a]" />
      </div>
      <div className="flex h-11 shrink-0 gap-0.5 border-b border-[#5a5c62] py-0.5 pl-0.5">
        <button type="button" aria-label="Time mode" className={clsx(MONO, 'w-[39px] shrink-0 border border-[#4e4f52] bg-[#34363c] text-[#73767e]')}>I</button>
        <div className="flex w-[69px] shrink-0 flex-col gap-px">
          <button type="button" className="flex-1 border-2 border-[#8a7a68] bg-[#c28347] leading-none text-[#3d0404]">TimeCode</button>
          <button type="button" className="flex-1 border-2 border-[#606062] bg-[#373941] pt-0.5 leading-none text-[#a3abc4]">Beats</button>
        </div>
        <output className="flex w-[200px] shrink-0 items-center justify-center border border-[#606062] bg-black pt-1 text-[26px] text-[#82a8f4]">{timecode}</output>
        <output className="flex w-[135px] shrink-0 items-center justify-center border border-[#606062] bg-black pt-1 text-[26px] text-[#82a8f4]">{frame}</output>
        <TransportButton label="Reset" d="M0 0H1V9H0ZM6 0V9L1.500 4.500ZM11 0V9L6.500 4.500Z" />
        <TransportButton label="Pause" d="M3 0H5V9H3ZM6 0H8V9H6Z" />
        <TransportButton label="Reverse" d="M7 1V8L3 4.500Z" />
        <TransportButton label="Play" active d="M3 1V8L7 4.500Z" />
        <TransportButton label="Step back" d="M3 4H8V5H3Z" />
        <TransportButton label="Step forward" d="M5 1H6V4H9V5H6V8H5V5H2V4H5Z" />
      </div>
      <div className="flex flex-1 items-center gap-[11px] bg-[#0b0a16] pt-px text-xs font-bold text-[#3a4a6c]">
        <span className="flex h-full w-[17px] items-center justify-center bg-[#394a6e] font-normal text-[#c4cce0]">/</span>
        Time Path: /
      </div>
    </div>
  </footer>
);

const Window = ({ title, focused, fps, status, path, timecode, frame, children }) => (
  <div className={clsx('flex min-w-0 flex-col border-l pr-px', focused ? 'border-[#72b5fd] bg-[#72b5fd]' : 'border-[#4c4238] bg-[#2c2c2c]')}>
    <TitleBar title={title} focused={focused} />
    <div className="flex min-h-0 flex-1 flex-col border-l border-[#4a4b4d]">
      <MenuBar fps={fps} status={status} />
      <LayoutBar />
      <PathBar path={path} />
      {children}
      <Timeline timecode={timecode} frame={frame} />
    </div>
  </div>
);

export default function App() {
  return (
    <div className="grid h-screen grid-cols-2 bg-[#221b18] pt-px pb-0.5 font-['DejaVu_Sans',sans-serif] text-[11px] text-[#a3abc4]">
      <Window
        title="TouchDesigner 2021.15240: C:/project-C/DJSystem/DJSystem.toe"
        fps={60}
        status="19:42:35 Load Project"
        path="/ project1 / >>"
        timecode="00:00:02.43"
        frame={164}
      >
        <LeftNetwork />
      </Window>
      <Window
        title="TouchDesigner 2021.15240: C:/project-C/DJSystem/DJSystem_Right3.toe*"
        focused
        fps={59}
        status="19:43:59 Load Project"
        path="/ project1"
        timecode="00:00:04.22"
        frame={263}
      >
        <RightNetwork />
      </Window>
    </div>
  );
}
